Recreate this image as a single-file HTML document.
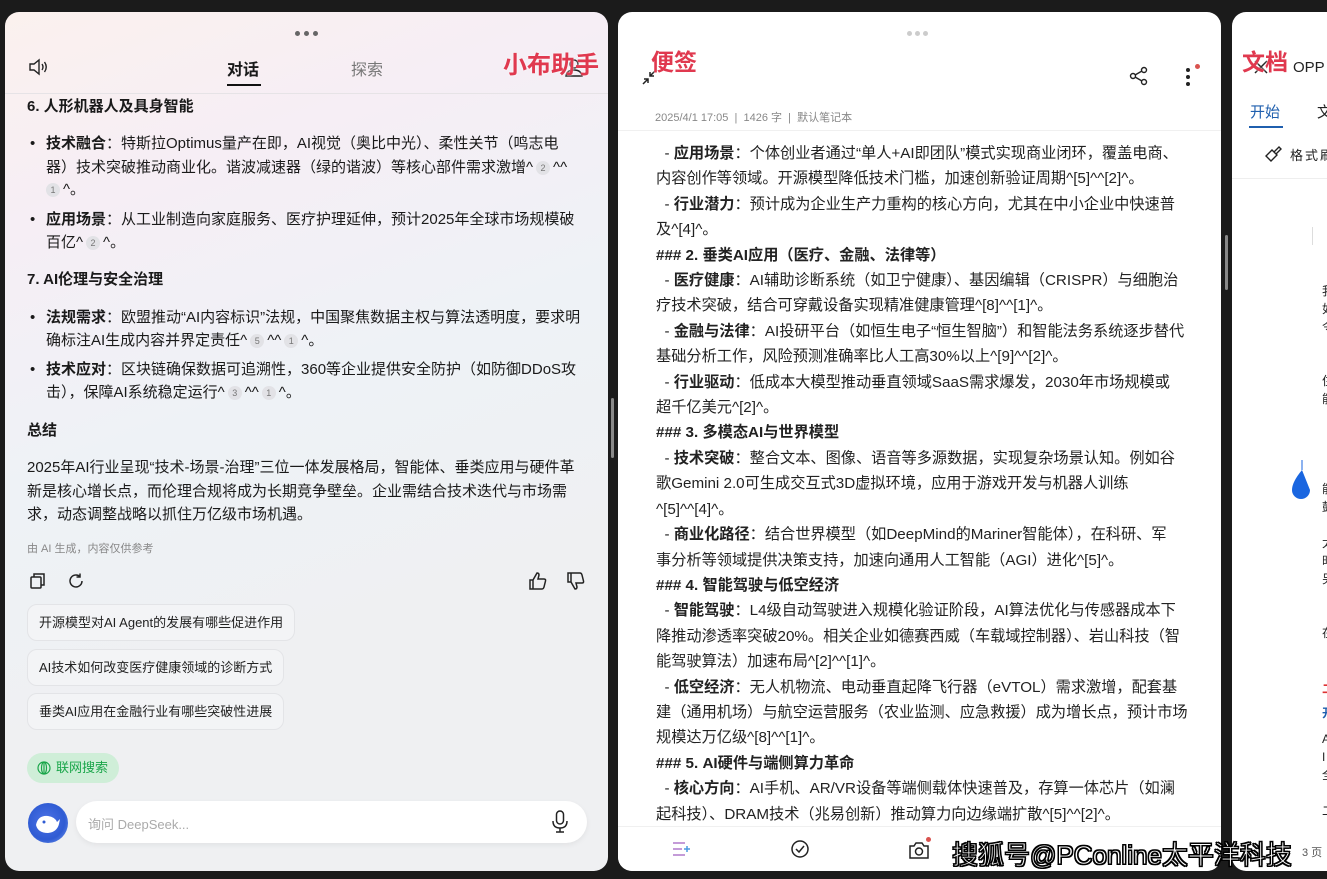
<!DOCTYPE html>
<html><head><meta charset="utf-8">
<style>
*{margin:0;padding:0;box-sizing:border-box}
body{width:1327px;height:879px;background:#1b1b1b;position:relative;overflow:hidden;font-family:"Liberation Sans","Noto Sans CJK SC",sans-serif;color:#1a1a1a}
.p{position:absolute;border-radius:14px;overflow:hidden}
.a{position:absolute;white-space:nowrap}
.t1{font-size:15px;line-height:20px}
.t2{font-size:15.2px;line-height:20px;color:#222}
b{font-weight:bold}
.sup{display:inline-block;width:14px;height:14px;border-radius:7px;background:#e2e2e6;color:#777;font-size:9px;line-height:14px;text-align:center;vertical-align:1px;margin:0 3px}
.chip{position:absolute;left:22px;height:37px;border:1px solid #e3e4e7;border-radius:10px;background:#f3f4f6;font-size:13px;line-height:35px;padding:0 11px;color:#222;white-space:nowrap}
.red{position:absolute;color:#e0394f;font-weight:bold;font-size:23px;font-family:"Liberation Sans","Noto Sans CJK SC",sans-serif;text-shadow:0 0 2px #fff}
.dot{position:absolute;width:5px;height:5px;border-radius:3px}
</style></head><body>

<!-- Panel 1 -->
<div class="p" style="left:5px;top:12px;width:603px;height:859px;background:linear-gradient(160deg,#fbf1ee 0%,#f6eef5 20%,#eef2f6 45%,#eff0f2 70%,#eff0f2 100%)">
  <div class="dot" style="left:290px;top:19px;background:#666"></div>
  <div class="dot" style="left:299px;top:19px;background:#666"></div>
  <div class="dot" style="left:308px;top:19px;background:#666"></div>
  <svg class="a" style="left:23px;top:45px" width="22" height="20" viewBox="0 0 22 20" fill="none" stroke="#222" stroke-width="1.4"><path d="M2 7h4l5-4v14l-5-4H2z"/><path d="M14 7q2 3 0 6M16.5 5q3.5 5 0 10"/></svg>
  <div class="a" style="left:222px;top:44px;font-size:16px;font-weight:bold">对话</div>
  <div style="position:absolute;left:222px;top:72px;width:34px;height:2px;background:#111"></div>
  <div class="a" style="left:346px;top:44px;font-size:16px;color:#777">探索</div>
  <svg class="a" style="left:558px;top:44px" width="22" height="22" viewBox="0 0 22 22" fill="none" stroke="#222" stroke-width="1.4"><circle cx="11" cy="8" r="4"/><path d="M3 20q1-6 8-6t8 6z"/></svg>
  <div style="position:absolute;left:0;top:81px;width:603px;height:1px;background:#e6e3e6"></div>

  <div class="a t1" style="left:22px;top:85px;font-weight:bold">6. 人形机器人及具身智能</div>
  <div class="a t1" style="left:25px;top:122px">•</div>
  <div class="a t1" style="left:41px;top:122px"><b>技术融合</b>：特斯拉Optimus量产在即，AI视觉（奥比中光）、柔性关节（鸣志电</div>
  <div class="a t1" style="left:41px;top:146px">器）技术突破推动商业化。谐波减速器（绿的谐波）等核心部件需求激增^<span class="sup">2</span>^^</div>
  <div class="a t1" style="left:41px;top:168px"><span class="sup" style="margin-left:0">1</span>^。</div>
  <div class="a t1" style="left:25px;top:198px">•</div>
  <div class="a t1" style="left:41px;top:198px"><b>应用场景</b>：从工业制造向家庭服务、医疗护理延伸，预计2025年全球市场规模破</div>
  <div class="a t1" style="left:41px;top:221px">百亿^<span class="sup">2</span>^。</div>
  <div class="a t1" style="left:22px;top:258px;font-weight:bold">7. AI伦理与安全治理</div>
  <div class="a t1" style="left:25px;top:296px">•</div>
  <div class="a t1" style="left:41px;top:296px"><b>法规需求</b>：欧盟推动“AI内容标识”法规，中国聚焦数据主权与算法透明度，要求明</div>
  <div class="a t1" style="left:41px;top:319px">确标注AI生成内容并界定责任^<span class="sup">5</span>^^<span class="sup">1</span>^。</div>
  <div class="a t1" style="left:25px;top:348px">•</div>
  <div class="a t1" style="left:41px;top:348px"><b>技术应对</b>：区块链确保数据可追溯性，360等企业提供安全防护（如防御DDoS攻</div>
  <div class="a t1" style="left:41px;top:371px">击），保障AI系统稳定运行^<span class="sup">3</span>^^<span class="sup">1</span>^。</div>
  <div class="a t1" style="left:22px;top:409px;font-weight:bold">总结</div>
  <div class="a t1" style="left:22px;top:446px">2025年AI行业呈现“技术-场景-治理”三位一体发展格局，智能体、垂类应用与硬件革</div>
  <div class="a t1" style="left:22px;top:470px">新是核心增长点，而伦理合规将成为长期竞争壁垒。企业需结合技术迭代与市场需</div>
  <div class="a t1" style="left:22px;top:493px">求，动态调整战略以抓住万亿级市场机遇。</div>
  <div class="a" style="left:22px;top:528px;font-size:11px;color:#888">由 AI 生成，内容仅供参考</div>

  <svg class="a" style="left:24px;top:560px" width="18" height="18" viewBox="0 0 18 18" fill="none" stroke="#222" stroke-width="1.5"><rect x="2" y="5" width="10" height="11" rx="1"/><path d="M5 5V2h10v11h-3"/></svg>
  <svg class="a" style="left:62px;top:560px" width="18" height="18" viewBox="0 0 18 18" fill="none" stroke="#222" stroke-width="1.5"><path d="M15 9a6 6 0 1 1-2-4.5"/><path d="M13 1.5v3.5h-3.5"/></svg>
  <svg class="a" style="left:523px;top:559px" width="20" height="20" viewBox="0 0 20 20" fill="none" stroke="#222" stroke-width="1.5"><path d="M2 9h3v9H2zM5 9l4-7q2 0 2 2l-1 4h6q2 0 1.5 2l-1.5 6q-.5 2-2 2H5"/></svg>
  <svg class="a" style="left:561px;top:559px" width="20" height="20" viewBox="0 0 20 20" fill="none" stroke="#222" stroke-width="1.5"><path d="M2 2h3v9H2zM5 11l4 7q2 0 2-2l-1-4h6q2 0 1.5-2L16 4q-.5-2-2-2H5"/></svg>

  <div class="chip" style="top:592px">开源模型对AI Agent的发展有哪些促进作用</div>
  <div class="chip" style="top:637px">AI技术如何改变医疗健康领域的诊断方式</div>
  <div class="chip" style="top:681px">垂类AI应用在金融行业有哪些突破性进展</div>

  <div class="a" style="left:22px;top:741px;width:92px;height:30px;border-radius:15px;background:#cfeed8;color:#1aa64a;font-size:13px;line-height:30px;padding-left:29px">联网搜索</div>
  <svg class="a" style="left:32px;top:749px" width="14" height="14" viewBox="0 0 14 14" fill="none" stroke="#1aa64a" stroke-width="1.2"><circle cx="7" cy="7" r="6"/><ellipse cx="7" cy="7" rx="2.5" ry="6"/><path d="M7 1v12"/></svg>

  <div class="a" style="left:23px;top:791px;width:40px;height:40px;border-radius:20px;background:radial-gradient(circle at 45% 45%,#4d73e6,#2f5bd3 60%,#7aa0f0)"></div>
  <svg class="a" style="left:28px;top:797px" width="30" height="28" viewBox="0 0 30 28"><path d="M3 16q2-10 12-9 7 1 9 6l3-3-1 5q-2 8-11 9Q5 24 3 16z" fill="#fff"/><circle cx="11" cy="13" r="1.5" fill="#2f5bd3"/></svg>
  <div class="a" style="left:71px;top:789px;width:511px;height:42px;border-radius:21px;background:#fff;box-shadow:0 2px 6px rgba(0,0,0,.06)"></div>
  <div class="a" style="left:83px;top:802px;font-size:13px;color:#aaa">询问 DeepSeek...</div>
  <svg class="a" style="left:546px;top:798px" width="18" height="24" viewBox="0 0 18 24" fill="none" stroke="#222" stroke-width="1.5"><rect x="5.5" y="1" width="7" height="13" rx="3.5"/><path d="M2 11q0 7 7 7t7-7M9 18v4M5 22h8"/></svg>
</div>
<div style="position:absolute;left:611px;top:398px;width:3px;height:60px;background:#888;border-radius:2px"></div>

<!-- Panel 2 -->
<div class="p" style="left:618px;top:12px;width:603px;height:859px;background:#fff">
  <div class="dot" style="left:289px;top:19px;background:#ccc"></div>
  <div class="dot" style="left:297px;top:19px;background:#ccc"></div>
  <div class="dot" style="left:305px;top:19px;background:#ccc"></div>
  <svg class="a" style="left:22px;top:55px" width="20" height="20" viewBox="0 0 20 20" fill="none" stroke="#222" stroke-width="1.5"><path d="M16 3l-6 6M10 5v4h4M3 17l5-5M4 12h4v4"/></svg>
  <svg class="a" style="left:511px;top:54px" width="20" height="20" viewBox="0 0 20 20" fill="none" stroke="#222" stroke-width="1.4"><circle cx="15" cy="4" r="2.5"/><circle cx="4" cy="10" r="2.5"/><circle cx="15" cy="16" r="2.5"/><path d="M6 9l7-4M6 11l7 4"/></svg>
  <div class="dot" style="left:568px;top:56px;background:#222;width:4px;height:4px"></div>
  <div class="dot" style="left:568px;top:63px;background:#222;width:4px;height:4px"></div>
  <div class="dot" style="left:568px;top:70px;background:#222;width:4px;height:4px"></div>
  <div class="dot" style="left:577px;top:52px;background:#d9534f"></div>
  <div class="a" style="left:37px;top:97px;font-size:11px;color:#888">2025/4/1 17:05 &nbsp;|&nbsp; 1426 字 &nbsp;|&nbsp; 默认笔记本</div>
  <div style="position:absolute;left:0;top:118px;width:603px;height:1px;background:#f0f0f0"></div>

  <div class="t2" style="position:absolute;left:38px;top:129px;line-height:25.4px;white-space:nowrap">
&nbsp;&nbsp;- <b>应用场景</b>：个体创业者通过“单人+AI即团队”模式实现商业闭环，覆盖电商、<br>
内容创作等领域。开源模型降低技术门槛，加速创新验证周期^[5]^^[2]^。<br>
&nbsp;&nbsp;- <b>行业潜力</b>：预计成为企业生产力重构的核心方向，尤其在中小企业中快速普<br>
及^[4]^。<br>
<b>### 2. 垂类AI应用（医疗、金融、法律等）</b><br>
&nbsp;&nbsp;- <b>医疗健康</b>：AI辅助诊断系统（如卫宁健康）、基因编辑（CRISPR）与细胞治<br>
疗技术突破，结合可穿戴设备实现精准健康管理^[8]^^[1]^。<br>
&nbsp;&nbsp;- <b>金融与法律</b>：AI投研平台（如恒生电子“恒生智脑”）和智能法务系统逐步替代<br>
基础分析工作，风险预测准确率比人工高30%以上^[9]^^[2]^。<br>
&nbsp;&nbsp;- <b>行业驱动</b>：低成本大模型推动垂直领域SaaS需求爆发，2030年市场规模或<br>
超千亿美元^[2]^。<br>
<b>### 3. 多模态AI与世界模型</b><br>
&nbsp;&nbsp;- <b>技术突破</b>：整合文本、图像、语音等多源数据，实现复杂场景认知。例如谷<br>
歌Gemini 2.0可生成交互式3D虚拟环境，应用于游戏开发与机器人训练<br>
^[5]^^[4]^。<br>
&nbsp;&nbsp;- <b>商业化路径</b>：结合世界模型（如DeepMind的Mariner智能体），在科研、军<br>
事分析等领域提供决策支持，加速向通用人工智能（AGI）进化^[5]^。<br>
<b>### 4. 智能驾驶与低空经济</b><br>
&nbsp;&nbsp;- <b>智能驾驶</b>：L4级自动驾驶进入规模化验证阶段，AI算法优化与传感器成本下<br>
降推动渗透率突破20%。相关企业如德赛西威（车载域控制器）、岩山科技（智<br>
能驾驶算法）加速布局^[2]^^[1]^。<br>
&nbsp;&nbsp;- <b>低空经济</b>：无人机物流、电动垂直起降飞行器（eVTOL）需求激增，配套基<br>
建（通用机场）与航空运营服务（农业监测、应急救援）成为增长点，预计市场<br>
规模达万亿级^[8]^^[1]^。<br>
<b>### 5. AI硬件与端侧算力革命</b><br>
&nbsp;&nbsp;- <b>核心方向</b>：AI手机、AR/VR设备等端侧载体快速普及，存算一体芯片（如澜<br>
起科技）、DRAM技术（兆易创新）推动算力向边缘端扩散^[5]^^[2]^。
  </div>
  <div style="position:absolute;left:0;top:814px;width:603px;height:45px;background:#fff;border-top:1px solid #f0f0f0"></div>
  <svg class="a" style="left:54px;top:828px" width="20" height="18" viewBox="0 0 20 18" fill="none" stroke-width="1.5"><path d="M1 3h12M1 9h9M1 15h12" stroke="#b07acb"/><path d="M15 6v6M12 9h6" stroke="#4a9be0"/></svg>
  <svg class="a" style="left:172px;top:827px" width="20" height="20" viewBox="0 0 20 20" fill="none" stroke="#222" stroke-width="1.5"><circle cx="10" cy="10" r="8"/><path d="M6 10l3 3 5-6"/></svg>
  <svg class="a" style="left:290px;top:828px" width="22" height="20" viewBox="0 0 22 20" fill="none" stroke="#222" stroke-width="1.5"><path d="M2 6h4l2-3h6l2 3h4v12H2z"/><circle cx="11" cy="11.5" r="3.5"/></svg>
  <div class="dot" style="left:308px;top:825px;background:#d9534f"></div>
</div>
<div style="position:absolute;left:1225px;top:235px;width:3px;height:55px;background:#888;border-radius:2px"></div>

<!-- Panel 3 -->
<div class="p" style="left:1232px;top:12px;width:120px;height:859px;background:#fff">
  <svg class="a" style="left:21px;top:47px" width="16" height="16" viewBox="0 0 16 16" stroke="#222" stroke-width="1.5"><path d="M2 2l12 12M14 2L2 14"/></svg>
  <div class="a" style="left:61px;top:47px;font-size:15px;color:#222">OPP</div>
  <div class="a" style="left:18px;top:89px;font-size:15px;color:#1f5fae">开始</div>
  <div style="position:absolute;left:17px;top:114px;width:34px;height:2px;background:#1f5fae"></div>
  <div class="a" style="left:85px;top:89px;font-size:15px;color:#222">文</div>
  <svg class="a" style="left:32px;top:131px" width="20" height="20" viewBox="0 0 20 20" fill="none" stroke="#222" stroke-width="1.4"><path d="M2 13l6-6 5 5-6 6zM10 9l5-5 2 2-5 5"/></svg>
  <div class="a" style="left:58px;top:133px;font-size:13px;color:#222;letter-spacing:2px">格式刷</div>
  <div style="position:absolute;left:0;top:166px;width:120px;height:1px;background:#eee"></div>
  <div class="a" style="left:80px;top:215px;width:1px;height:18px;background:#ddd"></div>
  <div class="a" style="left:90px;top:270px;font-size:12px;line-height:18px;color:#222">我<br>如<br>令<br><br><br>住<br>能<br><br><br><br><br>能<br>鼓<br><br>太<br>时<br>另<br><br><br>在</div>
  <svg class="a" style="left:58px;top:448px" width="20" height="40" viewBox="0 0 20 40"><path d="M12 0v10" stroke="#1a66e0"/><path d="M12 10q-10 12-10 20a8 8 0 0 0 18 0z" fill="#1a66e0"/></svg>
  <div class="a" style="left:90px;top:668px;font-size:12px;line-height:18px;color:#d33;font-weight:bold">二</div>
  <div class="a" style="left:90px;top:692px;font-size:12px;line-height:18px;color:#1f5fae;font-weight:bold">开</div>
  <div class="a" style="left:90px;top:718px;font-size:12px;line-height:18px;color:#222">A<br>I<br>全<br><br>二</div>
  <div class="a" style="left:70px;top:832px;font-size:11px;color:#555">3 页</div>
</div>

<!-- overlay labels -->
<div class="red" style="left:503px;top:45px;font-size:24px">小布助手</div>
<div class="red" style="left:651px;top:43px">便签</div>
<div class="red" style="left:1242px;top:43px">文档</div>
<div class="a" style="left:952px;top:835px;font-size:26px;color:#fff;font-family:'Liberation Sans','Noto Sans CJK SC',sans-serif;-webkit-text-stroke:1px #000;text-shadow:1px 1px 0 #000,-1px -1px 0 #000,1px -1px 0 #000,-1px 1px 0 #000">搜狐号@PConline太平洋科技</div>
</body></html>
